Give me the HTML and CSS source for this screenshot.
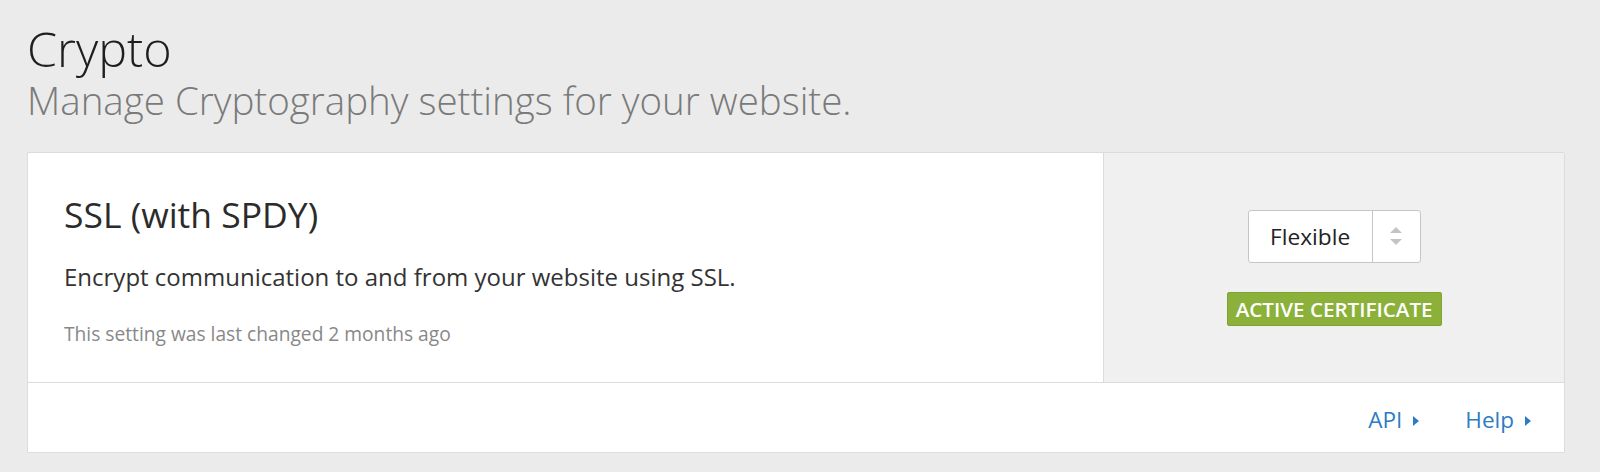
FILE: index.html
```html
<!DOCTYPE html>
<html>
<head>
<meta charset="utf-8">
<link rel="stylesheet" href="styles.css">
</head>
<body>
<div class="page">
  <header class="page-header">
    <h1 class="title">Crypto</h1>
    <p class="subtitle">Manage Cryptography settings for your website.</p>
  </header>
  <section class="card">
    <div class="card-main">
      <div class="card-body">
        <h2 class="card-title">SSL (with SPDY)</h2>
        <p class="card-desc">Encrypt communication to and from your website using SSL.</p>
        <p class="card-meta">This setting was last changed 2 months ago</p>
      </div>
      <div class="card-control">
        <div class="select">
          <span class="select-value">Flexible</span>
          <span class="select-arrows">
            <svg width="14" height="20" viewBox="0 0 14 20"><path d="M1 7 L7 1 L13 7 Z" fill="#c4c4c4"/><path d="M1 13 L7 19 L13 13 Z" fill="#c4c4c4"/></svg>
          </span>
        </div>
        <span class="badge">ACTIVE CERTIFICATE</span>
      </div>
    </div>
    <footer class="card-footer">
      <a class="link" href="#">API<svg class="caret" width="6" height="10" viewBox="0 0 6 10"><path d="M0 0 L6 5 L0 10 Z" fill="currentColor"/></svg></a>
      <a class="link" href="#">Help<svg class="caret" width="6" height="10" viewBox="0 0 6 10"><path d="M0 0 L6 5 L0 10 Z" fill="currentColor"/></svg></a>
    </footer>
  </section>
</div>
</body>
</html>
```

FILE: styles.css
```css
* { box-sizing: border-box; }
html, body {
  margin: 0;
  padding: 0;
  background: #ebebeb;
  font-family: "Open Sans", "Liberation Sans", sans-serif;
  color: #333;
}
.page {
  padding: 22px 35px 20px 27px;
}
.page-header {
  margin-bottom: 28px;
}
.title {
  margin: 0;
  font-size: 48.5px;
  font-weight: 300;
  line-height: 52px;
  color: #1e1e1e;
}
.subtitle {
  margin: 2px 0 0;
  font-size: 38.5px;
  font-weight: 300;
  line-height: 48px;
  color: #7a7a7a;
}
.card {
  background: #fff;
  border: 1px solid #dcdcdc;
  border-radius: 2px;
}
.card-main {
  display: flex;
  height: 230px;
  border-bottom: 1px solid #dcdcdc;
}
.card-body {
  flex: 0 0 70%;
  padding: 39px 36px 0;
}
.card-title {
  margin: 0;
  font-size: 35.5px;
  font-weight: 400;
  line-height: 44px;
  color: #2b2b2b;
}
.card-desc {
  margin: 25px 0 0;
  font-size: 24px;
  line-height: 32px;
  color: #333;
}
.card-meta {
  margin: 28px 0 0;
  font-size: 19.2px;
  line-height: 26px;
  color: #888;
}
.card-control {
  flex: 1;
  background: #f0f0f0;
  border-left: 1px solid #dcdcdc;
  display: flex;
  flex-direction: column;
  align-items: center;
  justify-content: center;
  gap: 29px;
}
.select {
  display: flex;
  width: 173px;
  height: 53px;
  background: #fff;
  border: 1px solid #c6c6c6;
  border-radius: 3px;
}
.select-value {
  flex: 1;
  display: flex;
  align-items: center;
  justify-content: center;
  font-size: 22.7px;
  color: #222;
  border-right: 1px solid #c6c6c6;
}
.select-arrows {
  width: 47px;
  display: flex;
  align-items: center;
  justify-content: center;
}
.badge {
  display: inline-block;
  background: #8bb13a;
  border: 1px solid #7fa332;
  border-radius: 2px;
  color: #fff;
  font-size: 20.6px;
  font-weight: 600;
  line-height: 32px;
  padding: 0 8px;
}
.card-footer {
  height: 69px;
  display: flex;
  justify-content: flex-end;
  align-items: center;
  gap: 46px;
  padding: 4px 33px 0 0;
}
.link {
  color: #2c7cc4;
  text-decoration: none;
  font-size: 22.5px;
  display: inline-flex;
  align-items: center;
}
.caret {
  margin-left: 11px;
  margin-top: 2px;
}
```
